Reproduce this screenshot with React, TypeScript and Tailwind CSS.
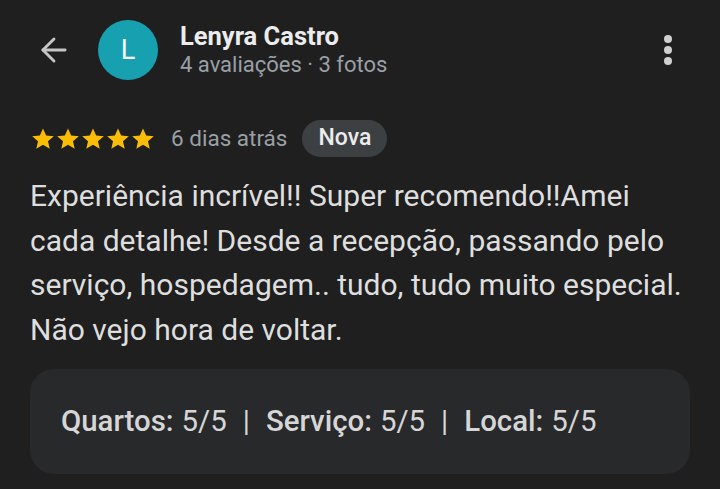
import { ArrowLeft } from "lucide-react";

const Star = () => (
  <svg viewBox="0 0 24 24" className="w-[26px] h-[26px] -mx-[0.5px]" fill="#fbbc04">
    <path d="M12 2.2l2.9 6.6 7.1.6-5.4 4.7 1.6 7-6.2-3.7-6.2 3.7 1.6-7L2 9.4l7.1-.6z" />
  </svg>
);

export default function App() {
  return (
    <div
      className="w-[720px] h-[489px] overflow-hidden bg-[#1f1f1f] text-[#e3e3e3]"
      style={{ fontFamily: "Roboto, 'Noto Sans', sans-serif" }}
    >
      <div className="flex items-center pt-[20px] pl-[35px] pr-[48px]">
        <ArrowLeft className="w-[38px] h-[38px] text-[#c4c7c5]" strokeWidth={1.8} />
        <div className="ml-[25px] w-[60px] h-[60px] rounded-full bg-[#16a0b0] flex items-center justify-center text-white text-[27px]">
          L
        </div>
        <div className="ml-[22px] flex flex-col flex-1">
          <span className="text-[25.5px] leading-[30px] font-bold text-[#ececec]">Lenyra Castro</span>
          <span className="text-[22px] leading-[28px] text-[#9aa0a6]">4 avaliações · 3 fotos</span>
        </div>
        <div className="flex flex-col gap-[3px] items-center">
          <span className="w-[8px] h-[8px] rounded-full bg-[#d0d0d0]" />
          <span className="w-[8px] h-[8px] rounded-full bg-[#d0d0d0]" />
          <span className="w-[8px] h-[8px] rounded-full bg-[#d0d0d0]" />
        </div>
      </div>

      <div className="flex items-center mt-[40px] pl-[30px]">
        <div className="flex">
          <Star />
          <Star />
          <Star />
          <Star />
          <Star />
        </div>
        <span className="ml-[16px] text-[22.5px] text-[#9aa0a6]">6 dias atrás</span>
        <span className="ml-[15px] h-[37px] px-[16px] rounded-full bg-[#3c4043] text-[23px] font-medium text-[#ececec] flex items-center">
          Nova
        </span>
      </div>

      <p className="mt-[17px] px-[30px] text-[30px] leading-[44.5px] text-[#dedede] whitespace-nowrap">
        Experiência incrível!! Super recomendo!!Amei
        <br />
        cada detalhe! Desde a recepção, passando pelo
        <br />
        serviço, hospedagem.. tudo, tudo muito especial.
        <br />
        Não vejo hora de voltar.
      </p>

      <div className="mt-[17px] mx-[30px] h-[105px] rounded-[24px] bg-[#28292b] flex items-center px-[31px] text-[29.4px] text-[#d6d6d6]">
        <span className="font-medium">Quartos:</span>
        <span className="ml-[8px]">5/5</span>
        <span className="mx-[16px]">|</span>
        <span className="font-medium">Serviço:</span>
        <span className="ml-[8px]">5/5</span>
        <span className="mx-[16px]">|</span>
        <span className="font-medium">Local:</span>
        <span className="ml-[8px]">5/5</span>
      </div>
    </div>
  );
}
